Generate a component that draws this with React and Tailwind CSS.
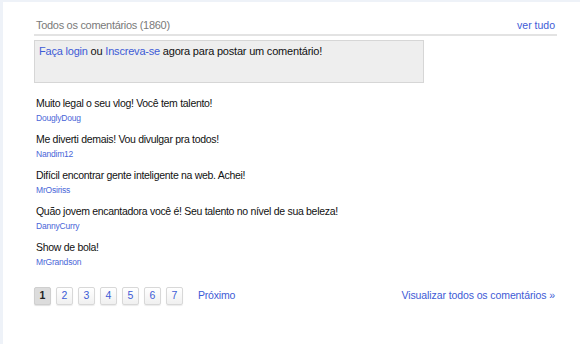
const comments = [
  { text: "Muito legal o seu vlog! Você tem talento!", user: "DouglyDoug" },
  { text: "Me diverti demais! Vou divulgar pra todos!", user: "Nandim12" },
  { text: "Difícil encontrar gente inteligente na web. Achei!", user: "MrOsiriss" },
  { text: "Quão jovem encantadora você é! Seu talento no nível de sua beleza!", user: "DannyCurry" },
  { text: "Show de bola!", user: "MrGrandson" },
];

const pages = [1, 2, 3, 4, 5, 6, 7];

export default function App() {
  return (
    <div className="w-[580px] h-[344px] bg-[#eef2f8] pl-[3px] pt-[2px] overflow-hidden font-['Liberation_Sans',Arial,sans-serif]">
      <div className="bg-white h-full pl-[31px] pr-[23px] pt-[16px]">
        {/* header */}
        <div className="flex justify-between items-end border-b-2 border-[#e3e3e3] pb-[2px] px-[2px]">
          <span className="text-[11px] tracking-[-0.3px] text-[#7a7a7a] leading-[14px]">Todos os comentários (1860)</span>
          <a className="text-[10.5px] text-[#3d5bd6] leading-[14px]">ver tudo</a>
        </div>

        {/* login box */}
        <div className="mt-[4px] w-[390px] h-[43px] bg-[#eeeeee] border border-[#d6d6d6] px-[4px] pt-[3px] text-[11px] tracking-[-0.2px] text-[#111] leading-[14px]">
          <a className="text-[#3d5bd6]">Faça login</a> ou <a className="text-[#3d5bd6]">Inscreva-se</a> agora para postar um comentário!
        </div>

        {/* comments */}
        <div className="mt-[13px] flex flex-col gap-[8px] pl-[2px]">
          {comments.map((c) => (
            <div key={c.user} className="flex flex-col">
              <p className="text-[10.5px] tracking-[-0.3px] text-[#111] leading-[14px]">{c.text}</p>
              <a className="mt-[3px] text-[8.5px] tracking-[-0.2px] text-[#4a66d8] leading-[11px]">{c.user}</a>
            </div>
          ))}
        </div>

        {/* pagination */}
        <div className="mt-[19px] flex items-center justify-between">
          <div className="flex items-center">
            <div className="flex gap-[5px]">
              {pages.map((p) => (
                <span
                  key={p}
                  className={
                    p === 1
                      ? "w-[17px] h-[18px] flex items-center justify-center rounded-[2px] border border-[#cfcfcf] bg-[#dcdcdc] shadow-[0_1px_1px_rgba(0,0,0,0.12)] text-[10.5px] font-bold text-[#222]"
                      : "w-[17px] h-[18px] flex items-center justify-center rounded-[2px] border border-[#d8d8d8] bg-gradient-to-b from-white to-[#f0f0f0] shadow-[0_1px_1px_rgba(0,0,0,0.08)] text-[10.5px] text-[#3d5bd6]"
                  }
                >
                  {p}
                </span>
              ))}
            </div>
            <a className="ml-[15px] text-[10.5px] tracking-[-0.2px] text-[#3d5bd6]">Próximo</a>
          </div>
          <a className="text-[10.5px] tracking-[-0.1px] text-[#3d5bd6] mr-[2px]">Visualizar todos os comentários »</a>
        </div>
      </div>
    </div>
  );
}
